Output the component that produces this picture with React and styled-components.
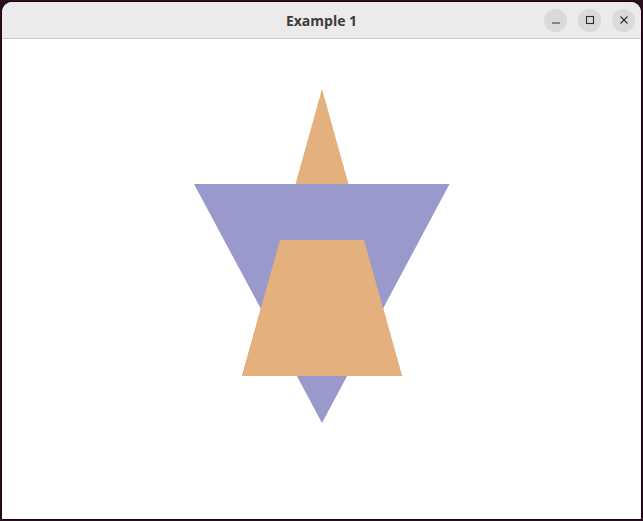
import React from 'react';
import styled, { createGlobalStyle } from 'styled-components';

const Global = createGlobalStyle`
  html, body {
    margin: 0;
    padding: 0;
    background: #2a0d1f;
    overflow: hidden;
  }
`;

const Desktop = styled.div`
  width: 643px;
  height: 521px;
  padding: 2px;
  box-sizing: border-box;
  display: flex;
`;

const Window = styled.div`
  flex: 1;
  display: flex;
  flex-direction: column;
  background: #fff;
  border-radius: 10px 10px 0 0;
  overflow: hidden;
  box-shadow: 0 0 0 1px #1a0712;
`;

const TitleBar = styled.div`
  height: 36px;
  flex: none;
  display: grid;
  grid-template-columns: 1fr auto 1fr;
  align-items: center;
  background: #ebebeb;
  border-bottom: 1px solid #c8c8c8;
  padding: 0 4px;
`;

const Title = styled.div`
  grid-column: 2;
  font-family: "Open Sans", "Noto Sans", sans-serif;
  font-weight: 700;
  font-size: 14px;
  color: #3c3c3c;
`;

const Controls = styled.div`
  grid-column: 3;
  justify-self: end;
  display: flex;
  gap: 11px;
  margin-right: 2px;
`;

const CtlButton = styled.div`
  width: 23px;
  height: 23px;
  border-radius: 50%;
  background: #dadada;
  display: grid;
  place-items: center;
  color: #2e2e2e;
`;

const Canvas = styled.div`
  flex: 1;
  display: flex;
`;

const Icon = ({ kind }) => (
  <svg width="10" height="10" viewBox="0 0 10 10" fill="none" stroke="#2e2e2e" strokeWidth="1.1">
    {kind === 'min' && <line x1="1" y1="8" x2="9" y2="8" />}
    {kind === 'max' && <rect x="1.5" y="1.5" width="7" height="7" />}
    {kind === 'close' && (
      <>
        <line x1="1.5" y1="1.5" x2="8.5" y2="8.5" />
        <line x1="8.5" y1="1.5" x2="1.5" y2="8.5" />
      </>
    )}
  </svg>
);

const ORANGE = '#e4b07d';
const BLUE = '#9a99cb';

export default function App() {
  return (
    <>
      <Global />
      <Desktop>
        <Window>
          <TitleBar>
            <Title>Example 1</Title>
            <Controls>
              <CtlButton><Icon kind="min" /></CtlButton>
              <CtlButton><Icon kind="max" /></CtlButton>
              <CtlButton><Icon kind="close" /></CtlButton>
            </Controls>
          </TitleBar>
          <Canvas>
            <svg width="100%" height="100%" viewBox="2 39 639 480" preserveAspectRatio="xMinYMin">
              <polygon points="322,89 402,376 242,376" fill={ORANGE} />
              <polygon points="194,184 449.5,184 322,423" fill={BLUE} />
              <polygon points="280,240 364,240 402,376 242,376" fill={ORANGE} />
            </svg>
          </Canvas>
        </Window>
      </Desktop>
    </>
  );
}
